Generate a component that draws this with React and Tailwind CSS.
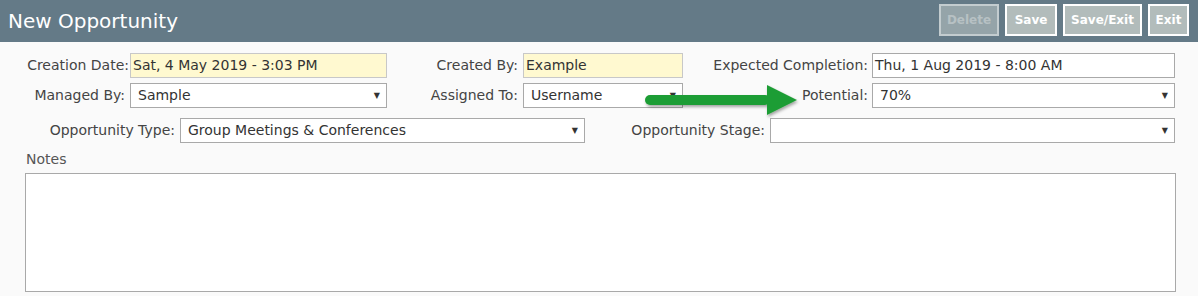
import React from 'react';

const font = { fontFamily: '"DejaVu Sans", Verdana, sans-serif' };

const Field = ({ value, yellow, className = '' }) => (
  <div
    className={`h-[25px] border flex items-center px-[2px] text-[14px] text-[#333] ${
      yellow ? 'bg-[#fff9d0] border-[#c8c8c8]' : 'bg-white border-[#a9a9a9]'
    } ${className}`}
  >
    {value}
  </div>
);

const Select = ({ value, className = '' }) => (
  <div
    className={`h-[25px] border border-[#a9a9a9] bg-white flex items-center justify-between pl-[7px] pr-[6px] text-[14px] text-[#333] ${className}`}
  >
    <span>{value}</span>
    <span className="text-[8px] text-[#333]">▼</span>
  </div>
);

const Label = ({ children, className = '' }) => (
  <div className={`text-right text-[14px] text-[#444] shrink-0 ${className}`}>{children}</div>
);

const Button = ({ children, disabled, className = '' }) => (
  <button
    className={`h-[32px] border-2 text-[12px] font-bold ${
      disabled
        ? 'bg-[#95a4a9] border-[#c3cccf] text-[#b7c1c4]'
        : 'bg-[#b2bcbb] border-white text-white'
    } ${className}`}
  >
    {children}
  </button>
);

const Arrow = () => (
  <svg className="absolute left-[640px] top-[82px]" width="165" height="40" viewBox="0 0 165 40">
    <defs>
      <filter id="sh" x="-10%" y="-30%" width="120%" height="160%">
        <feDropShadow dx="1" dy="2" stdDeviation="1.5" floodColor="#000" floodOpacity="0.35" />
      </filter>
    </defs>
    <g filter="url(#sh)" fill="#1f9d35">
      <rect x="5" y="13" width="125" height="10" rx="5" />
      <polygon points="127,3 157,18 127,33" />
    </g>
  </svg>
);

export default function App() {
  return (
    <div className="w-[1198px] h-[296px] bg-[#fafafa] relative overflow-hidden" style={font}>
      <div className="h-[42px] bg-[#647a87] flex items-center justify-between pl-[8px] pr-[9px]">
        <h1 className="text-[20px] text-white">New Opportunity</h1>
        <div className="flex gap-[6px] mt-[-2px]">
          <Button disabled className="w-[60px]">Delete</Button>
          <Button className="w-[52px]">Save</Button>
          <Button className="w-[79px]">Save/Exit</Button>
          <Button className="w-[41px]">Exit</Button>
        </div>
      </div>

      <div className="pt-[11px]">
        <div className="flex items-center">
          <Label className="w-[130px] pr-[1px]">Creation Date:</Label>
          <Field yellow value="Sat, 4 May 2019 - 3:03 PM" className="w-[257px]" />
          <Label className="w-[136px] pr-[5px]">Created By:</Label>
          <Field yellow value="Example" className="w-[160px]" />
          <Label className="w-[189px] pr-[4px]">Expected Completion:</Label>
          <Field value="Thu, 1 Aug 2019 - 8:00 AM" className="w-[303px]" />
        </div>
        <div className="flex items-center mt-[5px]">
          <Label className="w-[130px] pr-[5px]">Managed By:</Label>
          <Select value="Sample" className="w-[257px]" />
          <Label className="w-[136px] pr-[5px]">Assigned To:</Label>
          <Select value="Username" className="w-[160px]" />
          <Label className="w-[189px] pr-[4px]">Potential:</Label>
          <Select value="70%" className="w-[303px]" />
        </div>
        <div className="flex items-center mt-[10px]">
          <Label className="w-[180px] pr-[5px]">Opportunity Type:</Label>
          <Select value="Group Meetings & Conferences" className="w-[405px]" />
          <Label className="w-[185px] pr-[5px]">Opportunity Stage:</Label>
          <Select value="" className="w-[405px]" />
        </div>
        <div className="pl-[26px] mt-[6px] text-[14px] text-[#555]">Notes</div>
        <div className="ml-[25px] mt-[3px] w-[1151px] h-[119px] border border-[#a9a9a9] bg-white" />
      </div>

      <Arrow />
    </div>
  );
}
